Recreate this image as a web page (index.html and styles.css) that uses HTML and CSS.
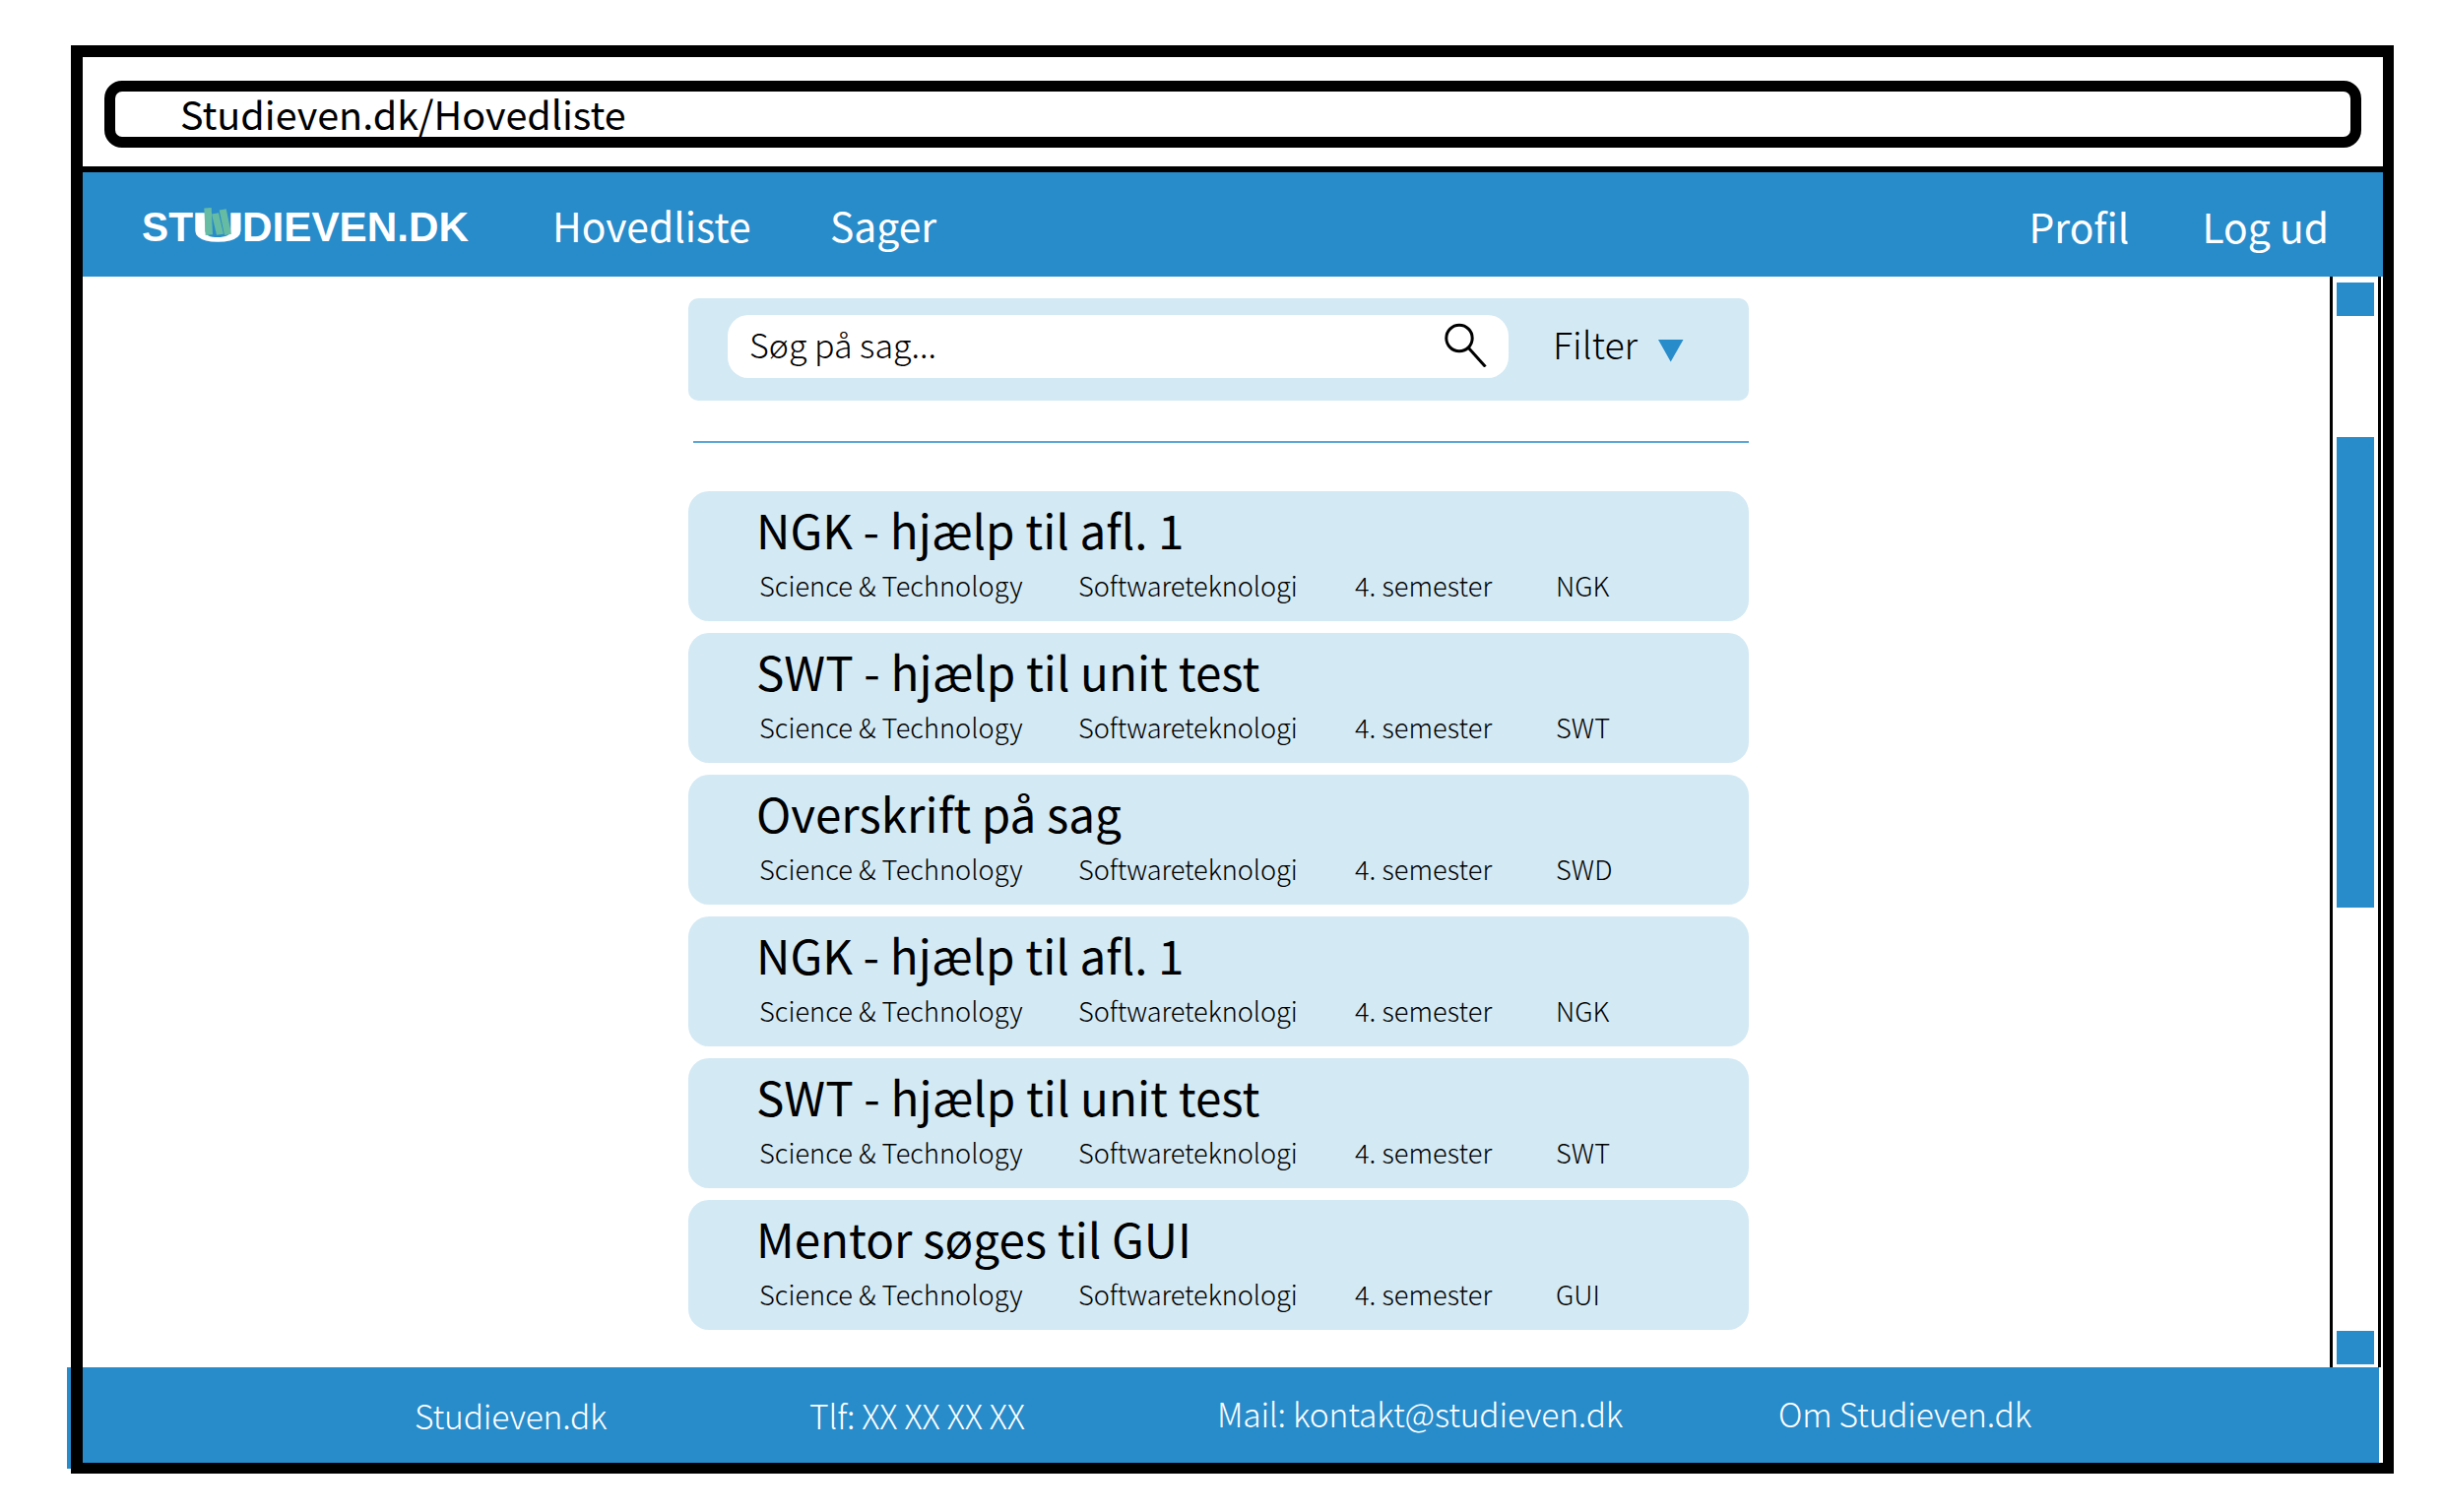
FILE: index.html
```html
<!DOCTYPE html>
<html lang="da">
<head>
<meta charset="utf-8">
<title>Studieven.dk - Hovedliste</title>
<link rel="stylesheet" href="styles.css">
</head>
<body>
<div class="window">
  <header class="chrome">
    <div class="address"><span>Studieven.dk/Hovedliste</span></div>
  </header>
  <nav class="nav">
    <svg class="logo" width="340" height="60" viewBox="-4 -10 340 60" role="img" aria-label="Studieven.dk">
      <g class="logo-text">
        <text x="0" y="34.5" textLength="52" lengthAdjust="spacingAndGlyphs">ST</text>
        <text class="logo-u" x="50" y="34.5" textLength="54.8" lengthAdjust="spacingAndGlyphs">U</text>
        <text x="102" y="34.5" textLength="230" lengthAdjust="spacingAndGlyphs">DIEVEN.DK</text>
      </g>
      <g class="logo-books">
        <path d="M63.3 1.5l7.4-.5 1.3 27.3-7.3.7z"/>
        <path d="M71 7.5l7-1.3 5 21.6-7 1z"/>
        <path d="M78.700 3.500l7-1.300 5.300 25.600-7 1.300z"/>
      </g>
    </svg>
    <a class="n-list">Hovedliste</a>
    <a>Sager</a>
    <div class="account"><a class="n-profile">Profil</a><a>Log ud</a></div>
  </nav>
  <div class="body">
    <main class="content">
      <div class="search">
        <div class="field">
          <span>Søg på sag...</span>
          <svg class="lens" width="46" height="47" viewBox="0 0 46 47"><circle cx="18" cy="17.5" r="13.2"/><path d="M27 27L44.500 46.500"/></svg>
        </div>
        <span class="filter">Filter</span>
        <svg class="arrow" width="26" height="23" viewBox="0 0 26 23"><path d="M0 0h25.500L12.700 22.500z"/></svg>
      </div>
      <hr class="rule">
      <ul class="cases">
        <li class="card"><h2>NGK - hjælp til afl. 1</h2><p><span>Science &amp; Technology</span><span class="line">Softwareteknologi</span><span>4. semester</span><span>NGK</span></p></li>
        <li class="card"><h2>SWT - hjælp til unit test</h2><p><span>Science &amp; Technology</span><span class="line">Softwareteknologi</span><span>4. semester</span><span>SWT</span></p></li>
        <li class="card"><h2>Overskrift på sag</h2><p><span>Science &amp; Technology</span><span class="line">Softwareteknologi</span><span>4. semester</span><span>SWD</span></p></li>
        <li class="card"><h2>NGK - hjælp til afl. 1</h2><p><span>Science &amp; Technology</span><span class="line">Softwareteknologi</span><span>4. semester</span><span>NGK</span></p></li>
        <li class="card"><h2>SWT - hjælp til unit test</h2><p><span>Science &amp; Technology</span><span class="line">Softwareteknologi</span><span>4. semester</span><span>SWT</span></p></li>
        <li class="card"><h2>Mentor søges til GUI</h2><p><span>Science &amp; Technology</span><span class="line">Softwareteknologi</span><span>4. semester</span><span>GUI</span></p></li>
      </ul>
    </main>
    <div class="scrollbar">
      <i class="s-up"></i><i class="s-thumb"></i><i class="s-down"></i>
    </div>
  </div>
  <footer class="footer">
    <span>Studieven.dk</span>
    <span>Tlf: XX XX XX XX</span>
    <span class="raised">Mail: kontakt@studieven.dk</span>
    <span class="raised">Om Studieven.dk</span>
  </footer>
</div>
</body>
</html>
```
FILE: styles.css
```css
* { box-sizing: border-box; }
body {
  margin: 0;
  padding: 46px 0 0 72px;
  background: #fff;
  color: #000;
  font-family: "Noto Sans CJK JP", "Noto Sans", sans-serif;
  white-space: nowrap;
}
.window {
  position: relative;
  width: 2359px;
  height: 1451px;
  border: 12px solid #000;
  border-right-width: 11px;
  border-bottom-width: 11px;
  display: flex;
  flex-direction: column;
}
/* footer colour showing outside the frame */
.window::before {
  content: "";
  position: absolute;
  left: -16px;
  top: 1331px;
  width: 4px;
  height: 103px;
  background: #288ccb;
}
.chrome {
  height: 117px;
  border-bottom: 6px solid #000;
  padding: 24px 22px 0;
}
.address {
  height: 68px;
  border: 11.5px solid #000;
  border-radius: 18px;
  padding-left: 66px;
  line-height: 43px;
  font-size: 39.5px;
}
.nav {
  height: 106px;
  background: #288ccb;
  color: #fff;
  display: flex;
  font-size: 40.8px;
  line-height: 107px;
}
.logo { margin: 25px 0 0 56px; flex: none; }
.logo-text { fill: #fff; font: bold 42.500px "Liberation Sans", sans-serif; }
.logo-u { font-size: 41px; font-weight: 400; stroke: #fff; stroke-width: 1.6; }
.logo-books { fill: #66bca2; }
.n-list { margin-left: 81px; width: 282px; }
.account { margin: 1px 55px 0 auto; display: flex; }
.n-profile { width: 176px; }
.body { height: 1108px; display: flex; }
.content { width: 1077px; margin-left: 615px; padding-top: 22px; }
.search {
  height: 104px;
  border-radius: 10px;
  background: #d3e9f4;
  display: flex;
  align-items: flex-start;
  padding: 17px 0 0 40px;
  font-weight: 300;
}
.field {
  width: 793px;
  height: 64px;
  border-radius: 21px;
  background: #fff;
  display: flex;
  justify-content: space-between;
  padding: 0 22px;
  font-size: 34px;
  line-height: 59px;
}
.lens { margin-top: 6px; fill: none; stroke: #000; stroke-width: 3; }
.filter { margin-left: 45px; width: 107px; font-size: 37.6px; line-height: 58px; }
.arrow { margin-top: 25px; fill: #288ccb; }
.rule { margin: 41px 0 49px 5px; border: 0; height: 2px; background: #5ba7d8; }
.cases { list-style: none; margin: 0; padding: 0; display: grid; gap: 12px; }
.card { height: 132px; border-radius: 21px; background: #d3e9f4; padding-left: 69px; }
.card h2 { margin: 0; padding-top: 10px; font-size: 47.6px; line-height: 57px; font-weight: 400; }
.card p {
  margin: 0;
  padding: 7px 0 0 3px;
  display: grid;
  grid-template-columns: 324px 281px 204px auto;
  font-size: 27.2px;
  letter-spacing: .04px;
  line-height: 43px;
  font-weight: 300;
}
.card .line { letter-spacing: -.1px; }
.scrollbar {
  width: 52px;
  margin-left: 590px;
  border: solid #000;
  border-width: 0 3px;
  padding: 6px 4px 0 4px;
}
.scrollbar i { display: block; width: 38px; background: #288ccb; }
.s-up { height: 34px; }
.s-thumb { height: 478px; margin-top: 123px; }
.s-down { height: 34px; margin-top: 430px; }
.footer {
  height: 97px;
  width: 2332px;
  background: #288ccb;
  color: #fff;
  display: grid;
  grid-template-columns: 401px 414px 570px auto;
  padding-left: 337px;
  font-size: 33.6px;
  letter-spacing: -.2px;
  line-height: 97px;
  font-weight: 300;
}
.footer .raised { line-height: 93px; }
```
